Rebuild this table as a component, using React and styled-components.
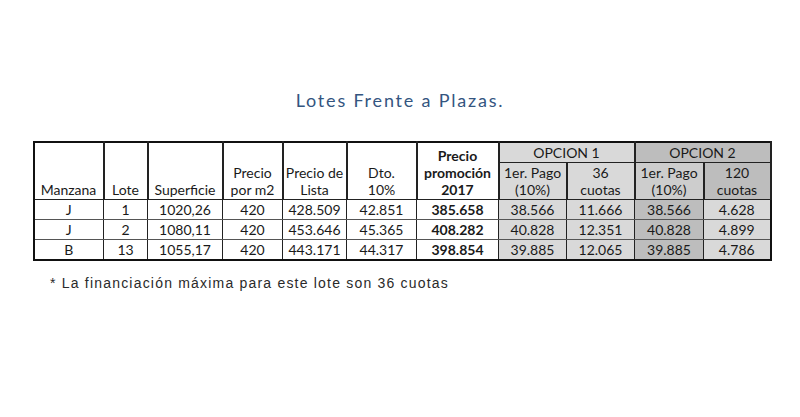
import React from 'react';
import styled, { createGlobalStyle } from 'styled-components';

const Global = createGlobalStyle`
  html, body {
    margin: 0;
    padding: 0;
    background: #ffffff;
  }
`;

const Page = styled.div`
  width: 800px;
  height: 417px;
  display: flex;
  flex-direction: column;
  align-items: center;
  background: #ffffff;
`;

const Title = styled.h1`
  margin: 88px 0 0 0;
  font-family: "Lato", "Open Sans", sans-serif;
  font-weight: 400;
  font-size: 18px;
  line-height: 24px;
  letter-spacing: 1.8px;
  color: #34557f;
`;

const Table = styled.table`
  margin: 29px 0 0 4px;
  width: 738px;
  border-collapse: collapse;
  border: 2px solid #111;
  font-family: "Lato", "Open Sans", sans-serif;
  font-size: 14px;
  color: #1a1a1a;
  table-layout: fixed;
`;

const shades = {
  white: '#ffffff',
  light: '#d9d9d9',
  mid: '#cdcdcd',
  dark: '#bdbdbd',
};

const Th = styled.th`
  border: 1px solid #222;
  border-width: 1px 2px 1px 1px;
  background: ${p => shades[p.$shade || 'white']};
  font-weight: ${p => (p.$bold ? 700 : 400)};
  text-align: center;
  vertical-align: bottom;
  line-height: 17px;
  padding: 0 2px 1px;
  height: ${p => p.$h || 'auto'};
`;

const Td = styled.td`
  border: 1px solid #555;
  border-left: 1px solid #222;
  border-right: 1px solid #222;
  background: ${p => shades[p.$shade || 'white']};
  font-weight: ${p => (p.$bold ? 700 : 400)};
  text-align: center;
  height: 19px;
  padding: 0 2px;
  line-height: 17px;
`;

const Note = styled.p`
  align-self: flex-start;
  margin: 14px 0 0 50px;
  font-family: "Liberation Sans", Arial, sans-serif;
  font-size: 14px;
  letter-spacing: 1.2px;
  color: #2a2a2a;
`;

const widths = [70, 44, 75, 60, 64, 70, 82, 68, 68, 69, 67];

const rows = [
  ['J', '1', '1020,26', '420', '428.509', '42.851', '385.658', '38.566', '11.666', '38.566', '4.628'],
  ['J', '2', '1080,11', '420', '453.646', '45.365', '408.282', '40.828', '12.351', '40.828', '4.899'],
  ['B', '13', '1055,17', '420', '443.171', '44.317', '398.854', '39.885', '12.065', '39.885', '4.786'],
];

const dataShade = [null, null, null, null, null, null, null, 'light', 'light', 'dark', 'light'];

export default function App() {
  return (
    <Page>
      <Global />
      <Title>Lotes Frente a Plazas.</Title>
      <Table>
        <colgroup>
          {widths.map((w, i) => (
            <col key={i} style={{ width: w }} />
          ))}
        </colgroup>
        <thead>
          <tr>
            <Th rowSpan={2}>Manzana</Th>
            <Th rowSpan={2}>Lote</Th>
            <Th rowSpan={2}>Superficie</Th>
            <Th rowSpan={2}>Precio<br />por m2</Th>
            <Th rowSpan={2}>Precio de<br />Lista</Th>
            <Th rowSpan={2}>Dto.<br />10%</Th>
            <Th rowSpan={2} $bold>Precio<br />promoción<br />2017</Th>
            <Th colSpan={2} $shade="light" $h="18px">OPCION 1</Th>
            <Th colSpan={2} $shade="dark" $h="18px">OPCION 2</Th>
          </tr>
          <tr>
            <Th $shade="light" $h="35px">1er. Pago<br />(10%)</Th>
            <Th $shade="light">36<br />cuotas</Th>
            <Th $shade="mid">1er. Pago<br />(10%)</Th>
            <Th $shade="dark">120<br />cuotas</Th>
          </tr>
        </thead>
        <tbody>
          {rows.map((r, i) => (
            <tr key={i}>
              {r.map((v, j) => (
                <Td key={j} $bold={j === 6} $shade={dataShade[j]}>
                  {v}
                </Td>
              ))}
            </tr>
          ))}
        </tbody>
      </Table>
      <Note>* La financiación máxima para este lote son 36 cuotas</Note>
    </Page>
  );
}
